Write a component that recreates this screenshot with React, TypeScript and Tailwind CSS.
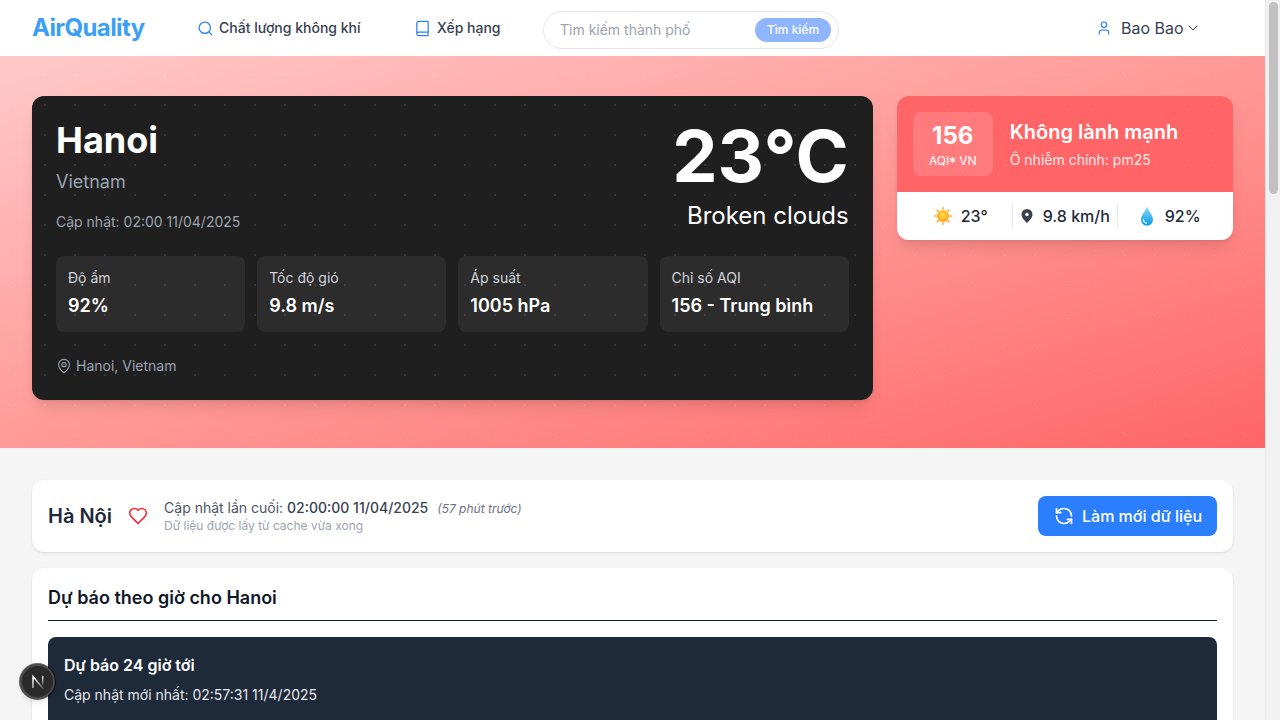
import { Book, ChevronDown, MapPin, RefreshCcw, Search, User } from "lucide-react";

const stats = [
  { label: "Độ ẩm", value: "92%" },
  { label: "Tốc độ gió", value: "9.8 m/s" },
  { label: "Áp suất", value: "1005 hPa" },
  { label: "Chỉ số AQI", value: "156 - Trung bình" },
];

function SunIcon() {
  return (
    <svg width="20" height="20" viewBox="0 0 20 20">
      <defs>
        <radialGradient id="sun" cx="50%" cy="40%" r="60%">
          <stop offset="0%" stopColor="#ffe34d" />
          <stop offset="100%" stopColor="#fb9e12" />
        </radialGradient>
      </defs>
      <g fill="#f7b562">
        <path d="M10 0l1.500 3.500h-3z" />
        <path d="M10 20l1.500-3.500h-3z" />
        <path d="M0 10l3.500-1.500v3z" />
        <path d="M20 10l-3.500-1.500v3z" />
        <path d="M3 3l3.500 1.400-2.100 2.100z" />
        <path d="M17 3l-3.500 1.400 2.100 2.100z" />
        <path d="M3 17l3.500-1.400-2.100-2.100z" />
        <path d="M17 17l-3.500-1.400 2.100-2.100z" />
      </g>
      <circle cx="10" cy="10" r="6" fill="url(#sun)" />
    </svg>
  );
}

function DropIcon() {
  return (
    <svg width="14" height="20" viewBox="0 0 14 20">
      <defs>
        <linearGradient id="drop" x1="0" y1="0" x2="0" y2="1">
          <stop offset="0%" stopColor="#8fd8f8" />
          <stop offset="100%" stopColor="#0b9be6" />
        </linearGradient>
      </defs>
      <path d="M7 .5C8 4.500 13 9 13 13.400 13 17 10.300 19.500 7 19.500S1 17 1 13.400C1 9 6 4.500 7 .5z" fill="url(#drop)" />
      <path d="M3.500 13.500c0 2 1.200 3.400 3 3.700" stroke="#e2f7ff" strokeWidth="1.200" fill="none" strokeLinecap="round" />
    </svg>
  );
}

function WindPin() {
  return (
    <svg width="12" height="14" viewBox="0 0 12 14" fill="#374151">
      <path fillRule="evenodd" d="M6 0a5.500 5.500 0 0 1 5.500 5.500C11.500 9 8 12 6 14 4 12 .5 9 .5 5.500A5.500 5.500 0 0 1 6 0zm0 3.700a1.800 1.800 0 1 0 0 3.600 1.800 1.800 0 0 0 0-3.600z" />
    </svg>
  );
}

function HeartOutline() {
  return (
    <svg width="20" height="20" viewBox="0 0 24 24" fill="none" stroke="#fb2c36" strokeWidth="2" strokeLinecap="round" strokeLinejoin="round">
      <path d="M19 14c1.490-1.460 3-3.210 3-5.500A5.500 5.500 0 0 0 16.500 3c-1.760 0-3 .5-4.500 2-1.500-1.500-2.740-2-4.500-2A5.500 5.500 0 0 0 2 8.500c0 2.300 1.500 4.050 3 5.500l7 7Z" />
    </svg>
  );
}

function NextMark() {
  return (
    <svg width="16" height="16" viewBox="0 0 16 16" fill="none">
      <defs>
        <linearGradient id="nextFade" x1="5" y1="4" x2="14" y2="15" gradientUnits="userSpaceOnUse">
          <stop offset="0%" stopColor="#fff" />
          <stop offset="100%" stopColor="#fff" stopOpacity="0.1" />
        </linearGradient>
        <linearGradient id="nextStem" x1="12.500" y1="2" x2="12.500" y2="11" gradientUnits="userSpaceOnUse">
          <stop offset="0%" stopColor="#fff" />
          <stop offset="100%" stopColor="#fff" stopOpacity="0.2" />
        </linearGradient>
      </defs>
      <path d="M3 14V2.500l10.500 12.500" stroke="url(#nextFade)" strokeWidth="1.500" />
      <rect x="12" y="2" width="1.400" height="9" fill="url(#nextStem)" />
    </svg>
  );
}

export default function App() {
  return (
    <div className="relative flex h-[720px] w-[1280px] overflow-hidden bg-[#f5f5f5] font-['Inter',sans-serif] text-[#1f2937]">
      <div className="w-[1265px] shrink-0 overflow-hidden">
        <header className="flex h-14 items-center bg-white pl-8">
          <div className="w-[165px] text-2xl font-bold leading-8 tracking-[-0.6px] text-[#3b9ff6]">AirQuality</div>
          <nav className="flex items-center">
            <a className="flex w-[217px] items-center gap-[5px] text-sm font-medium text-[#374151]">
              <Search size={17} strokeWidth={1.75} className="text-[#2b7fff]" />
              Chất lượng không khí
            </a>
            <a className="flex w-[129px] items-center gap-[6px] text-sm font-medium text-[#374151]">
              <Book size={17} strokeWidth={1.75} className="text-[#2b7fff]" />
              Xếp hạng
            </a>
          </nav>
          <div className="mt-1 flex h-[38px] w-[296px] items-center justify-between rounded-full border border-[#e5e7eb] bg-white pl-4 pr-[7px]">
            <span className="text-sm text-[#9ca3af]">Tìm kiếm thành phố</span>
            <span className="flex h-6 w-[76px] items-center justify-center rounded-full bg-[#8fb5ff] text-xs font-medium text-white">Tìm kiếm</span>
          </div>
          <div className="ml-[257px] flex items-center gap-[9px] text-[#374151]">
            <User size={16} strokeWidth={1.75} className="text-[#2b7fff]" />
            <span className="text-base">Bao Bao</span>
            <ChevronDown size={16} strokeWidth={1.5} className="-ml-2" />
          </div>
        </header>

        <section className="relative grid h-[392px] grid-cols-[5fr_2fr] items-start gap-6 bg-linear-to-br from-[#ffc9c9] to-[#ff6467] px-8 pt-10">
          <div className="relative h-[304px] rounded-xl bg-[#1f1f1f] p-6 shadow-lg">
            <div className="flex items-start justify-between">
              <div>
                <h1 className="text-4xl font-bold leading-10 text-white">Hanoi</h1>
                <div className="mt-2 text-lg leading-7 text-[#9ca3af]">Vietnam</div>
                <div className="mt-4 text-sm leading-5 text-[#9ca3af]">Cập nhật: 02:00 11/04/2025</div>
              </div>
              <div className="text-right">
                <div className="text-[72px] font-bold leading-[72px] text-white">23°C</div>
                <div className="mt-2 text-2xl leading-8 text-white">Broken clouds</div>
              </div>
            </div>
            <div className="mt-6 grid grid-cols-4 gap-3">
              {stats.map((s) => (
                <div key={s.label} className="h-[76px] rounded-lg bg-[#2c2c2c] px-3 pt-3">
                  <div className="text-sm leading-5 text-[#d1d5db]">{s.label}</div>
                  <div className="mt-1 text-lg font-semibold leading-7 text-white">{s.value}</div>
                </div>
              ))}
            </div>
            <div className="mt-6 flex items-center gap-1 text-sm leading-5 text-[#9ca3af]">
              <MapPin size={16} strokeWidth={1.75} />
              Hanoi, Vietnam
            </div>
          </div>

          <div className="relative h-[144px] overflow-hidden rounded-xl shadow-lg">
            <div className="flex h-24 items-center gap-[17px] bg-[#ff6467] px-4">
              <div className="flex h-16 w-20 flex-col items-center justify-center rounded-lg bg-white/15 text-white">
                <div className="text-2xl font-bold leading-8">156</div>
                <div className="text-xs leading-4">
                  AQI<span className="relative top-[3px] -mx-[0.5px] text-[15px] leading-none">*</span> VN
                </div>
              </div>
              <div>
                <div className="text-xl font-semibold leading-7 text-white">Không lành mạnh</div>
                <div className="mt-1 text-sm leading-5 text-white/85">Ô nhiễm chính: pm25</div>
              </div>
            </div>
            <div className="flex h-12 items-center bg-white text-[#1f2937]">
              <div className="flex w-[115px] items-center justify-end gap-2 pr-6 font-medium">
                <SunIcon />
                23°
              </div>
              <div className="h-6 w-px bg-[#e5e7eb]" />
              <div className="flex w-[104px] items-center gap-2.5 pl-2 font-medium">
                <WindPin />
                9.8 km/h
              </div>
              <div className="h-6 w-px bg-[#e5e7eb]" />
              <div className="flex items-center gap-[11px] pl-[22px] font-medium">
                <DropIcon />
                92%
              </div>
            </div>
          </div>

          {/* dot texture sits over the whole hero, cards included */}
          <div className="pointer-events-none absolute inset-0 bg-[radial-gradient(rgba(255,255,255,0.1)_1px,transparent_1px)] bg-[size:30px_30px] bg-[position:0_4px]" />
        </section>

        <main className="flex flex-col gap-4 px-8 pt-8">
          <div className="flex h-[72px] items-center justify-between rounded-xl bg-white px-4 shadow-sm">
            <div className="flex items-center">
              <h2 className="text-xl font-semibold text-[#1e293b]">Hà Nội</h2>
              <div className="ml-4"><HeartOutline /></div>
              <div className="ml-4">
                <div className="text-sm leading-5 text-[#4b5563]">
                  Cập nhật lần cuối: <span className="font-medium text-[#374151]">02:00:00 11/04/2025</span>
                  <span className="ml-[9px] text-xs italic text-[#6b7280]">(57 phút trước)</span>
                </div>
                <div className="text-xs leading-4 text-[#9ca3af]">Dữ liệu được lấy từ cache vừa xong</div>
              </div>
            </div>
            <button className="flex h-10 w-[179px] items-center gap-2 rounded-lg bg-[#2b7fff] pl-4 text-base font-medium text-white">
              <RefreshCcw size={20} strokeWidth={2} />
              Làm mới dữ liệu
            </button>
          </div>

          <div className="rounded-xl bg-white px-4 pt-4 shadow-sm">
            <h3 className="border-b border-[#101828] pb-2 text-lg font-semibold leading-7 text-[#101828]">Dự báo theo giờ cho Hanoi</h3>
            <div className="mt-4 h-[200px] rounded-lg bg-[#1e2939] p-4 text-white">
              <div className="text-base font-semibold leading-6">Dự báo 24 giờ tới</div>
              <div className="mt-2 text-sm leading-5 text-[#e5e7eb]">Cập nhật mới nhất: 02:57:31 11/4/2025</div>
            </div>
          </div>
        </main>
      </div>

      <div className="flex w-[15px] shrink-0 justify-center border-l border-[#e8e8e8] bg-[#f1f1f1] pt-[2px]">
        <div className="h-[192px] w-[9px] rounded-full bg-[#c1c1c1]" />
      </div>

      <div className="absolute bottom-[21px] left-5 flex h-[35px] w-[35px] items-center justify-center rounded-full border-2 border-[#4a4a4a] bg-[#2a2a2a] shadow-md ring-1 ring-black/60">
        <NextMark />
      </div>
    </div>
  );
}
